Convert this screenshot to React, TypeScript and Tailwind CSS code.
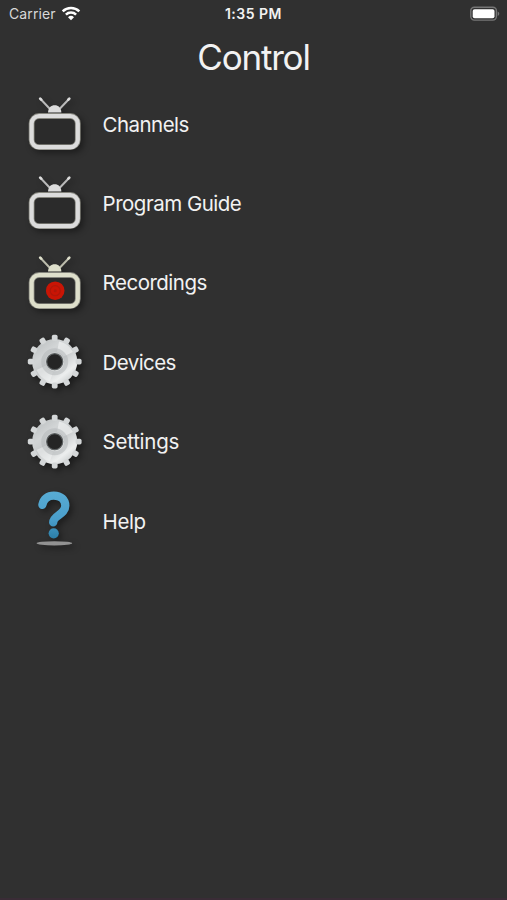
import type { ReactNode } from 'react'

const TEETH = Array.from({ length: 12 }, (_, i) => i * 30)

function TvIcon({ recording = false }: { recording?: boolean }) {
  const color = recording ? '#dedfcb' : '#dcdcdc'
  return (
    <svg viewBox="0 0 80 80" className="h-20 w-20 drop-shadow-[3px_3px_3px_rgba(0,0,0,0.4)]">
      <g stroke={color} strokeLinecap="round" fill="none">
        <path d="M25.8 14.3 34.5 23.5M53.8 14.3 45 23.5" strokeWidth="2" opacity="0.8" />
        <path d="M25.2 13.6l1 1M54.3 13.6l-1 1" strokeWidth="2.7" />
      </g>
      <path d="M33 27.6c.3-4.8 3-7.3 6.7-7.3s6.4 2.5 6.7 7.3z" fill={color} />
      <rect x="16.6" y="31" width="46.2" height="31.2" rx="7.5" fill="#2b2b2b" stroke="#85857d" strokeWidth="5.8" />
      <rect x="16.6" y="31" width="46.2" height="31.2" rx="7.5" fill="none" stroke={color} strokeWidth="4.2" />
      {recording && (
        <>
          <circle cx="40.2" cy="46.7" r="9.3" fill="#c91505" />
          <circle cx="40.2" cy="46.7" r="5" fill="none" stroke="#b01708" strokeWidth="1.2" />
          <circle cx="40.2" cy="46.7" r="1.5" fill="#b01708" />
        </>
      )}
    </svg>
  )
}

function GearIcon({ id }: { id: string }) {
  return (
    <svg viewBox="0 0 80 80" className="h-20 w-20 drop-shadow-[3px_3px_3px_rgba(0,0,0,0.45)]">
      <defs>
        <linearGradient id={id} x1="22" y1="16" x2="57" y2="61" gradientUnits="userSpaceOnUse">
          <stop offset="0" stopColor="#b9bdbe" />
          <stop offset="0.3" stopColor="#d2d5d6" />
          <stop offset="0.5" stopColor="#c6c9ca" />
          <stop offset="0.78" stopColor="#eceeee" />
          <stop offset="1" stopColor="#bfc3c4" />
        </linearGradient>
      </defs>
      <circle cx="39.7" cy="38.7" r="22.6" fill={`url(#${id})`} />
      {TEETH.map(a => (
        <rect key={a} x="36.8" y="11.8" width="5.8" height="6" rx="1.8" fill="#d4d7d8" transform={`rotate(${a} 39.7 38.7)`} />
      ))}
      <path d="M21.5 47 31 42.5A10 10 0 0 0 38 49l-3 9.5A20 20 0 0 1 21.5 47z" fill="#f4f5f5" opacity="0.5" />
      <path d="M44 18.5A20 20 0 0 1 58 29l-9.500 4.500A10 10 0 0 0 42 29z" fill="#f4f5f5" opacity="0.6" />
      <circle cx="39.7" cy="38.7" r="11.5" fill="none" stroke="#b4b8b9" strokeWidth="4" opacity="0.55" />
      <circle cx="39.7" cy="38.7" r="8" fill="#252525" stroke="#5c6061" strokeWidth="1.2" />
    </svg>
  )
}

function HelpIcon() {
  return (
    <svg viewBox="0 0 80 80" className="h-20 w-20 drop-shadow-[3px_3px_3px_rgba(0,0,0,0.4)]">
      <defs>
        <linearGradient id="help" x1="0" y1="10" x2="0" y2="56" gradientUnits="userSpaceOnUse">
          <stop offset="0" stopColor="#58acd4" />
          <stop offset="0.6" stopColor="#4a9ecb" />
          <stop offset="1" stopColor="#2c7fa8" />
        </linearGradient>
      </defs>
      <ellipse cx="39.4" cy="61.3" rx="17.8" ry="2.1" fill="#929292" />
      <path
        d="M27.4 22.8C28.5 17 33 13.600 38.800 13.600c7 0 11.500 4.100 11.500 10.200 0 8.800-12.100 9.400-12.100 16.600"
        fill="none"
        stroke="url(#help)"
        strokeWidth="8.3"
        strokeLinecap="round"
      />
      <circle cx="38.7" cy="51.3" r="5.1" fill="url(#help)" />
    </svg>
  )
}

function WifiIcon() {
  return (
    <svg viewBox="0 0 20 15" className="h-[15px] w-5">
      <g fill="none" stroke="#fff" strokeWidth="2.5">
        <path d="M1.700 5.300a11.800 11.800 0 0 1 16.600 0" />
        <path d="M4.900 8.600a7.200 7.200 0 0 1 10.200 0" />
      </g>
      <path d="M10 14.200 7 11.200a4.300 4.300 0 0 1 6 0z" fill="#fff" />
    </svg>
  )
}

function BatteryIcon() {
  return (
    <svg viewBox="0 0 30 16" className="h-4 w-[30px]">
      <rect x="0.8" y="1.3" width="25.6" height="12.8" rx="3.5" fill="none" stroke="#757575" strokeWidth="1.4" />
      <rect x="2.7" y="3.2" width="21.8" height="9" rx="1.9" fill="#fff" />
      <path d="M27.700 5.500c2.100.8 2.100 3.600 0 4.400z" fill="#757575" />
    </svg>
  )
}

const ITEMS: { label: string; icon: ReactNode; tracking: string }[] = [
  { label: 'Channels', icon: <TvIcon />, tracking: 'tracking-[-0.55px]' },
  { label: 'Program Guide', icon: <TvIcon />, tracking: 'tracking-[-0.5px]' },
  { label: 'Recordings', icon: <TvIcon recording />, tracking: 'tracking-[-0.5px]' },
  { label: 'Devices', icon: <GearIcon id="gear-devices" />, tracking: 'tracking-[-0.6px]' },
  { label: 'Settings', icon: <GearIcon id="gear-settings" />, tracking: 'tracking-[-0.25px]' },
  { label: 'Help', icon: <HelpIcon />, tracking: 'tracking-[-0.45px]' },
]

export default function App() {
  return (
    <div className="flex h-[900px] w-[507px] flex-col overflow-hidden border-b-2 border-[#3a2c36] bg-[#303030] font-['Inter','Liberation_Sans',sans-serif] text-[#f2f2f2]">
      <header className="grid h-7 shrink-0 grid-cols-[1fr_auto_1fr] items-center pr-[7px] pl-[9px]">
        <div className="flex items-center gap-[5px] pb-0.5">
          <span className="text-[14px] tracking-[0.1px] text-[#d8d8d8]">Carrier</span>
          <WifiIcon />
        </div>
        <span className="-ml-0.5 pb-0.5 text-center text-[14px] font-semibold tracking-[0.5px]">1:35 PM</span>
        <div className="flex justify-end pb-px">
          <BatteryIcon />
        </div>
      </header>

      <h1 className="mb-[1.4px] flex h-14 shrink-0 items-center justify-center pt-[3px] text-[35px] font-normal tracking-[-1.2px]">Control</h1>

      <nav className="flex flex-col">
        {ITEMS.map(item => (
          <a key={item.label} className="flex h-[79.4px] items-center pl-[15px]">
            <span className="mr-[7.6px] h-20 w-20 shrink-0">{item.icon}</span>
            <span className={`text-[20.5px] ${item.tracking}`}>{item.label}</span>
          </a>
        ))}
      </nav>
    </div>
  )
}
